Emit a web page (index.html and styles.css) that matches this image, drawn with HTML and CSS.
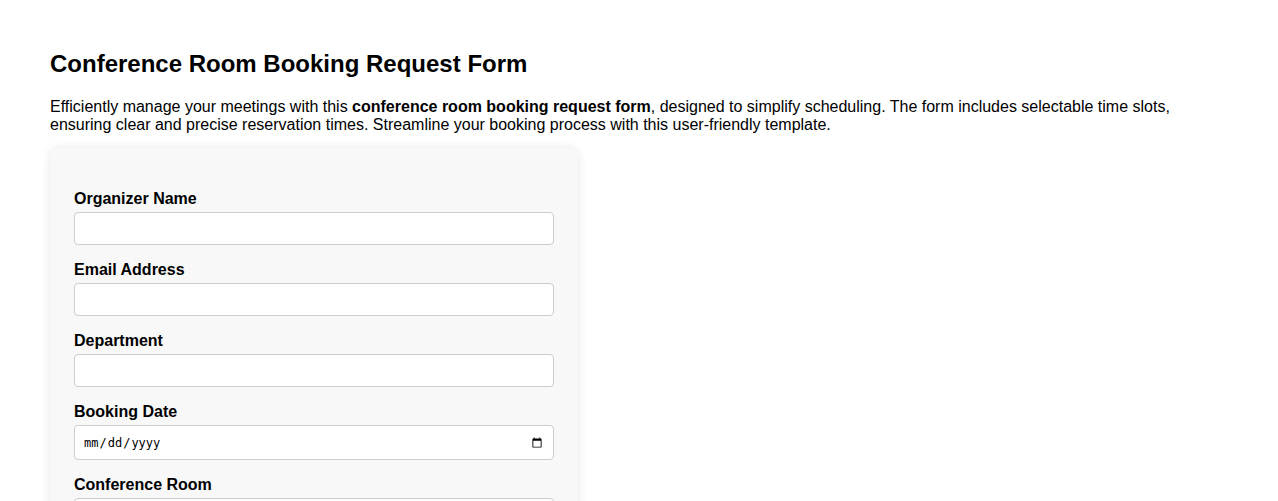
FILE: index.html
```html
<!DOCTYPE html>
<html lang="en">
<head>
<meta charset="utf-8">
<title>Conference Room Booking Request Form</title>
<link rel="stylesheet" href="styles.css">
</head>
<body>
<main class="page">
  <h1 class="title">Conference Room Booking Request Form</h1>
  <p class="intro">Efficiently manage your meetings with this <strong>conference room booking request form</strong>, designed to simplify scheduling. The form includes selectable time slots, ensuring clear and precise reservation times. Streamline your booking process with this user-friendly template.</p>
  <form class="card">
    <div class="group">
      <label class="label" for="name">Organizer Name</label>
      <input class="field" id="name" type="text">
    </div>
    <div class="group">
      <label class="label" for="email">Email Address</label>
      <input class="field" id="email" type="email">
    </div>
    <div class="group">
      <label class="label" for="dept">Department</label>
      <input class="field" id="dept" type="text">
    </div>
    <div class="group">
      <label class="label" for="date">Booking Date</label>
      <input class="field field-date" id="date" type="date">
    </div>
    <div class="group">
      <label class="label" for="room">Conference Room</label>
      <select class="field" id="room">
        <option></option>
      </select>
    </div>
  </form>
</main>
</body>
</html>
```
FILE: styles.css
```css
html, body {
  margin: 0;
  padding: 0;
  background: #ffffff;
}
body {
  font-family: "Liberation Sans", Arial, sans-serif;
  color: #000;
}
.page {
  padding: 50px 50px 40px;
}
.title {
  font-size: 24px;
  font-weight: bold;
  margin: 0 0 20px;
  line-height: 28px;
}
.intro {
  font-size: 16px;
  line-height: 18px;
  margin: 0 0 14px;
}
.card {
  width: 528px;
  box-sizing: border-box;
  background: #f8f8f8;
  border-radius: 8px;
  box-shadow: 0 0 10px rgba(0, 0, 0, 0.1);
  padding: 42px 24px 24px;
}
.group {
  display: flex;
  flex-direction: column;
  margin-bottom: 16px;
}
.label {
  font-size: 16px;
  font-weight: bold;
  line-height: 18px;
  margin-bottom: 4px;
}
.field {
  box-sizing: border-box;
  width: 480px;
  height: 33px;
  border: 1px solid #cccccc;
  border-radius: 4px;
  background: #fff;
  padding: 0 8px;
  font-family: "Liberation Sans", Arial, sans-serif;
  font-size: 14px;
}
.field-date {
  height: 35px;
  font-family: "DejaVu Sans Mono", monospace;
  font-size: 12px;
  color: #000;
}
```
